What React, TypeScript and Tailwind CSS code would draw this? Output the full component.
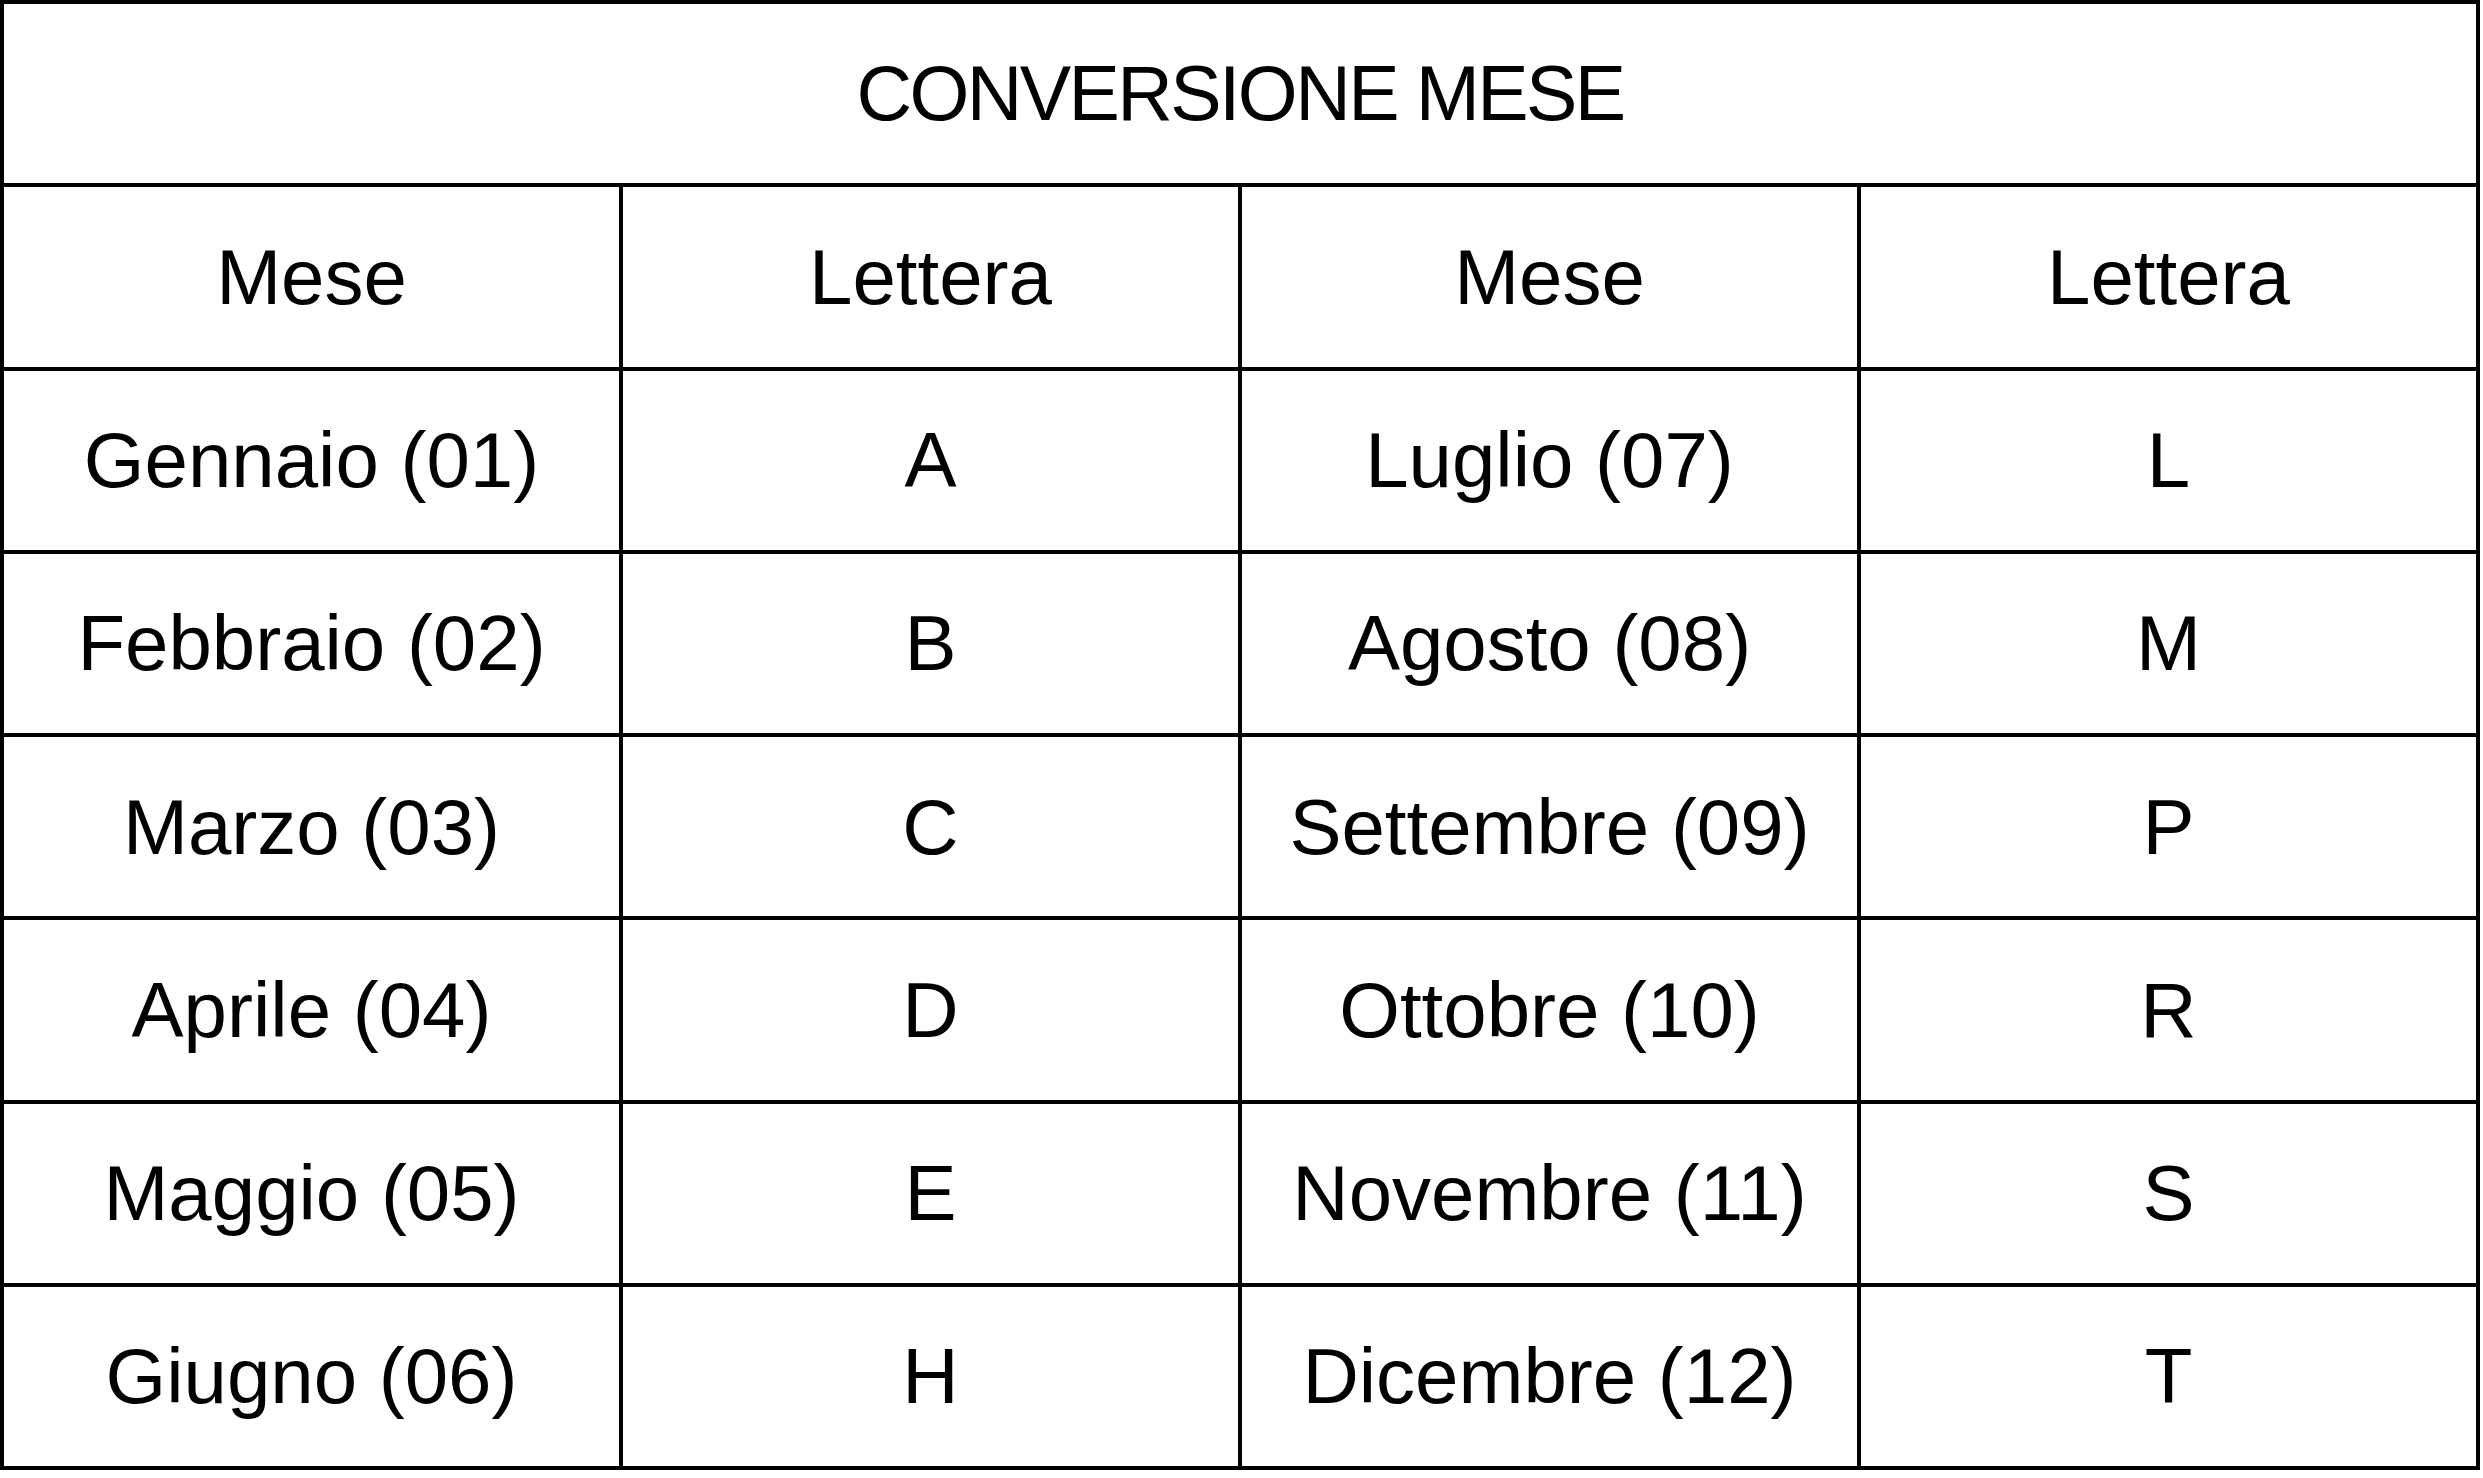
const rows: [string, string, string, string][] = [
  ["Gennaio (01)", "A", "Luglio (07)", "L"],
  ["Febbraio (02)", "B", "Agosto (08)", "M"],
  ["Marzo (03)", "C", "Settembre (09)", "P"],
  ["Aprile (04)", "D", "Ottobre (10)", "R"],
  ["Maggio (05)", "E", "Novembre (11)", "S"],
  ["Giugno (06)", "H", "Dicembre (12)", "T"],
];

function Cell({ children }: { children: React.ReactNode }) {
  return (
    <div className="bg-white flex items-center justify-center text-[78px] leading-none text-black">
      {children}
    </div>
  );
}

export default function App() {
  return (
    <div className="w-[2483px] h-[1478px] bg-white font-['Liberation_Sans',Arial,sans-serif]">
      <div className="w-[2480px] h-[1470px] bg-black p-[4px] grid grid-cols-4 grid-rows-8 gap-[4px]">
        <div className="col-span-4 bg-white flex items-center justify-center text-[77px] leading-none tracking-[-2.6px] text-black">
          CONVERSIONE MESE
        </div>
        <Cell>Mese</Cell>
        <Cell>Lettera</Cell>
        <Cell>Mese</Cell>
        <Cell>Lettera</Cell>
        {rows.map((r) => r.map((t, i) => <Cell key={r[0] + i}>{t}</Cell>))}
      </div>
    </div>
  );
}
